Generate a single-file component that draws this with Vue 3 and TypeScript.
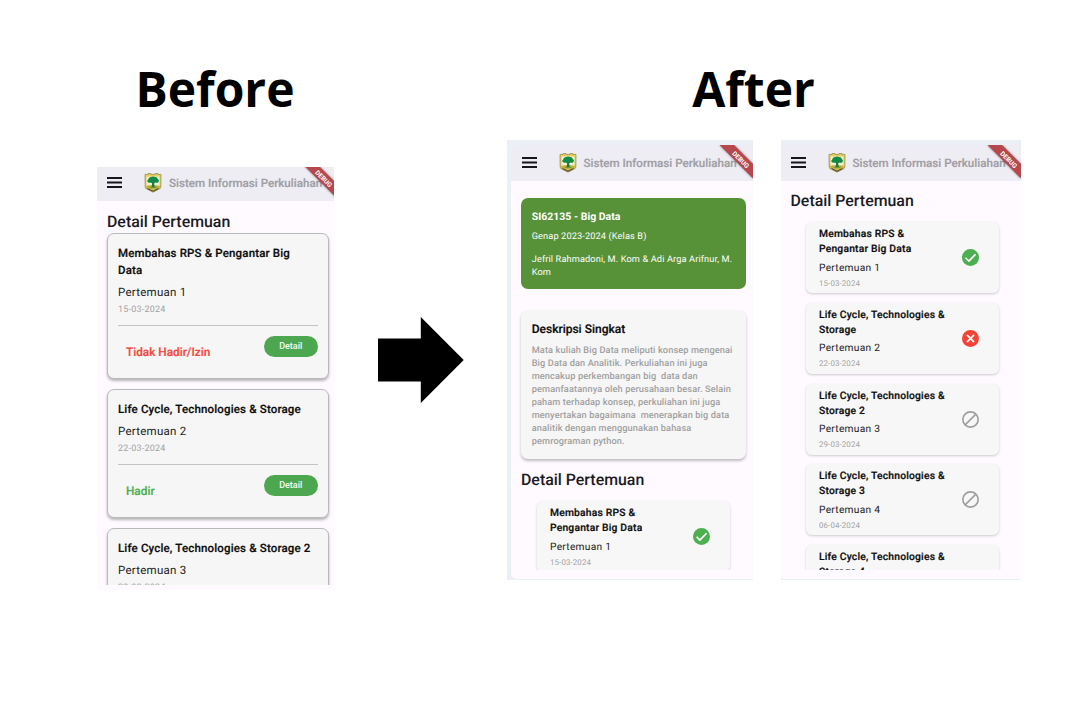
<script setup lang="ts">
import { defineComponent, h } from 'vue'

type Status = 'present' | 'absent' | 'none'

interface Meeting {
  title: string[]
  name: string
  date: string
  status: Status
}

interface OldMeeting {
  title: string[]
  name: string
  date: string
  label: string
  tone: string
}

const oldMeetings: OldMeeting[] = [
  { title: ['Membahas RPS & Pengantar Big', 'Data'], name: 'Pertemuan 1', date: '15-03-2024', label: 'Tidak Hadir/Izin', tone: 'red' },
  { title: ['Life Cycle, Technologies & Storage'], name: 'Pertemuan 2', date: '22-03-2024', label: 'Hadir', tone: 'green' },
  { title: ['Life Cycle, Technologies & Storage 2'], name: 'Pertemuan 3', date: '29-03-2024', label: '', tone: 'green' },
]

const meetings: Meeting[] = [
  { title: ['Membahas RPS &', 'Pengantar Big Data'], name: 'Pertemuan 1', date: '15-03-2024', status: 'present' },
  { title: ['Life Cycle, Technologies &', 'Storage'], name: 'Pertemuan 2', date: '22-03-2024', status: 'absent' },
  { title: ['Life Cycle, Technologies &', 'Storage 2'], name: 'Pertemuan 3', date: '29-03-2024', status: 'none' },
  { title: ['Life Cycle, Technologies &', 'Storage 3'], name: 'Pertemuan 4', date: '06-04-2024', status: 'none' },
  { title: ['Life Cycle, Technologies &', 'Storage 4'], name: '', date: '', status: 'none' },
]

const description: string[] = [
  'Mata kuliah Big Data meliputi konsep mengenai',
  'Big Data dan Analitik. Perkuliahan ini juga',
  'mencakup perkembangan big  data dan',
  'pemanfaatannya oleh perusahaan besar. Selain',
  'paham terhadap konsep, perkuliahan ini juga',
  'menyertakan bagaimana  menerapkan big data',
  'analitik dengan menggunakan bahasa',
  'pemrograman python.',
]

const AppBar = defineComponent({
  setup() {
    return () =>
      h('header', { class: 'bar' }, [
        h('svg', { class: 'bar-menu', viewBox: '0 0 15 11' }, [
          h('path', { d: 'M0 1h15M0 5.5h15M0 10h15', stroke: '#17171a', 'stroke-width': 1.8 }),
        ]),
        h('svg', { class: 'bar-logo', viewBox: '0 0 18 20' }, [
          h('path', { d: 'M1 2.600V1.400h3V.6h3v.8h4V.6h3v.8h3v1.200l-.2 11.400q-.3 2-2.400 2.400L9 19.200l-5.400-2.800Q1.200 16 1.200 14z', fill: '#e4cf5c', stroke: '#8a8148', 'stroke-width': 0.7 }),
          h('path', { d: 'M2.600 3.600h12.800v9.400H2.600z', fill: '#f3efd6' }),
          h('path', { d: 'M2.400 12.800q6.300-1.800 13.200 0v2L9 16.800l-6.600-2z', fill: '#c0b03a' }),
          h('path', { d: 'M8.100 9h2l.4 4.600 2.500.900H5.600l2.300-.900z', fill: '#1d7a3a' }),
          h('path', { d: 'M3.600 9Q2.600 7.600 4.200 6.400q.3-2.200 2.700-2.300 2.200-1.300 4.200 0 2.300-.1 2.700 2 2 1.200.7 2.800-1 1.500-2.800.6-1.300 1-2.600.3-1.400.7-2.700-.2-1.500.5-2.800-.6z', fill: '#0f8a47' }),
          h('path', { d: 'M3.500 15.600L9 18.200l5.500-2.600', fill: 'none', stroke: '#4d4632', 'stroke-width': 1.1 }),
        ]),
        h('span', { class: 'bar-title' }, 'Sistem Informasi Perkuliahan'),
        h('svg', { class: 'bar-ribbon', viewBox: '0 0 36 36' }, [
          h('path', { class: 'band', d: 'M2.500 0H17L36 19V33.500z' }),
          h('text', { x: 0, y: 2.2, transform: 'translate(23.7 14.700) rotate(45)', 'text-anchor': 'middle' }, 'DEBUG'),
        ]),
      ])
  },
})
</script>

<template>
  <main class="page">
    <section class="before">
      <h1 class="heading">Before</h1>
      <div class="phone phone-old">
        <AppBar />
        <div class="view view-old">
          <h2 class="section-title">Detail Pertemuan</h2>
          <article v-for="m in oldMeetings" :key="m.name" class="old-card">
            <h3 class="old-title"><span v-for="l in m.title" :key="l">{{ l }}</span></h3>
            <p class="old-name">{{ m.name }}</p>
            <p class="old-date">{{ m.date }}</p>
            <div v-if="m.label" class="old-foot">
              <span class="old-status" :class="m.tone">{{ m.label }}</span>
              <button class="old-button" type="button">Detail</button>
            </div>
          </article>
        </div>
      </div>
    </section>

    <svg class="arrow" viewBox="0 0 86 86"><path d="M0 21.500h42.800V0L85.700 42.900 42.800 86V64.600H0z" /></svg>

    <section class="after">
      <h1 class="heading">After</h1>
      <div class="phones">
        <div class="frame frame-a">
          <div class="phone">
            <AppBar />
            <div class="view view-a">
              <div class="course">
                <h3>SI62135 - Big Data</h3>
                <p class="term">Genap 2023-2024 (Kelas B)</p>
                <p class="staff">Jefril Rahmadoni, M. Kom &amp; Adi Arga Arifnur, M.</p>
                <p class="staff">Kom</p>
              </div>
              <div class="about">
                <h3>Deskripsi Singkat</h3>
                <p v-for="l in description" :key="l">{{ l }}</p>
              </div>
              <h2 class="section-title">Detail Pertemuan</h2>
              <div class="list">
                <article v-for="m in meetings.slice(0, 1)" :key="m.name" class="card">
                  <div class="card-text">
                    <h4><span v-for="l in m.title" :key="l">{{ l }}</span></h4>
                    <p class="name">{{ m.name }}</p>
                    <p class="date">{{ m.date }}</p>
                  </div>
                  <svg class="state" viewBox="0 0 20 20">
                    <circle cx="10" cy="10" r="10" fill="#4caf50" />
                    <path d="M4.200 10.300l3.900 3.800 7.900-7.900" fill="none" stroke="#fff" stroke-width="2" />
                  </svg>
                </article>
              </div>
            </div>
          </div>
        </div>

        <div class="frame frame-b">
          <div class="phone">
            <AppBar />
            <div class="view view-b">
              <h2 class="section-title">Detail Pertemuan</h2>
              <div class="list">
                <article v-for="m in meetings" :key="m.title[1]" class="card">
                  <div class="card-text">
                    <h4><span v-for="l in m.title" :key="l">{{ l }}</span></h4>
                    <p class="name">{{ m.name }}</p>
                    <p class="date">{{ m.date }}</p>
                  </div>
                  <svg class="state" viewBox="0 0 20 20">
                    <template v-if="m.status === 'present'">
                      <circle cx="10" cy="10" r="10" fill="#4caf50" />
                      <path d="M4.200 10.300l3.900 3.800 7.900-7.900" fill="none" stroke="#fff" stroke-width="2" />
                    </template>
                    <template v-else-if="m.status === 'absent'">
                      <circle cx="10" cy="10" r="10" fill="#f44336" />
                      <path d="M5.800 5.800l8.400 8.400M14.200 5.800l-8.400 8.400" stroke="#fff" stroke-width="2" />
                    </template>
                    <g v-else fill="none" stroke="#9e9e9e" stroke-width="1.9">
                      <circle cx="10" cy="10" r="9" />
                      <path d="M3.700 16.300L16.300 3.700" />
                    </g>
                  </svg>
                </article>
              </div>
            </div>
          </div>
        </div>
      </div>
    </section>
  </main>
</template>

<style>
body {
  margin: 0;
  background: #fff;
}

.bar {
  display: flex;
  align-items: center;
  position: relative;
  box-sizing: border-box;
  flex: none;
  height: 36.5px;
  overflow: hidden;
  background: #efedf4;
}

.bar-menu {
  flex: none;
  width: 15px;
  height: 11px;
}

.bar-logo {
  flex: none;
  width: 18px;
  height: 20px;
  margin-left: 22px;
}

.bar-title {
  margin-left: 7px;
  color: #a09fa4;
  font-size: 11.6px;
  font-weight: 500;
  white-space: nowrap;
  -webkit-text-stroke: 0.2px #a09fa4;
}

.bar-ribbon {
  position: absolute;
  top: 0;
  right: 0;
  width: 36px;
  height: 36px;
}

.bar-ribbon .band {
  fill: #b6474c;
  filter: drop-shadow(0 0 1px rgba(0, 0, 0, 0.5));
}

.bar-ribbon text {
  fill: #fff;
  font-size: 6.5px;
  font-weight: 700;
}
</style>

<style scoped>
.page {
  display: flex;
  width: 1080px;
  height: 720px;
  overflow: hidden;
  background: #fff;
  font-family: Roboto, "Liberation Sans", sans-serif;
  text-rendering: geometricPrecision;
}

h1, h2, h3, h4, p {
  margin: 0;
  white-space: pre;
}

.heading {
  height: 66px;
  color: #000;
  font-family: "Open Sans", "Noto Sans", sans-serif;
  font-size: 48px;
  font-weight: 700;
  line-height: 66px;
  text-align: center;
  text-rendering: auto;
}

.before {
  width: 238px;
  margin-left: 96px;
  padding-top: 56px;
}

.arrow {
  flex: none;
  width: 86px;
  height: 86px;
  margin: 317px 43px 0 44px;
}

.after {
  width: 514px;
  padding-top: 56px;
}

.after .heading {
  padding-right: 21px;
}

.phones {
  display: flex;
  gap: 28px;
  margin-top: 18px;
}

.phone {
  display: flex;
  flex-direction: column;
  overflow: hidden;
  background: #fefaff;
}

.phone-old {
  height: 423px;
  margin-top: 45px;
  margin-left: 1px;
}

.phone-old :deep(.bar) {
  height: 34px;
  padding: 0 0 3px 10px;
}

.phone-old :deep(.bar-ribbon) {
  top: -3px;
  right: -2px;
}

.frame {
  box-sizing: border-box;
  height: 440px;
  overflow: hidden;
  background: #ebf0f7;
}

.frame-a {
  width: 246px;
  padding: 4.5px 0 1px 4px;
}

.frame-b {
  width: 240px;
  padding: 4.5px 0 1px 0;
}

.frame .phone {
  height: 100%;
}

.frame-a .phone {
  border-radius: 6px 0 0 6px;
}

.frame-b .phone {
  border-radius: 0 0 0 3px;
}

.frame-a :deep(.bar) {
  padding-left: 10.500px;
}

.frame-b :deep(.bar) {
  padding-left: 9.500px;
}

.section-title {
  color: #1b1b1f;
  font-size: 15.900px;
  font-weight: 500;
  line-height: 20px;
}

.view {
  box-sizing: border-box;
  overflow: hidden;
}

.view-old {
  height: 384px;
  padding: 11px 5px 0 10px;
}

.old-card {
  box-sizing: border-box;
  width: 222px;
  margin-bottom: 10.500px;
  padding: 10.500px 10px 0;
  border: 1px solid #b9b9bb;
  border-radius: 7px;
  background: #f6f6f6;
  box-shadow: 0 2px 3px rgba(0, 0, 0, 0.28);
}

.view-old .section-title {
  margin-bottom: 1px;
}

.old-title {
  color: #0c0c0c;
  font-size: 11.500px;
  font-weight: 500;
  letter-spacing: 0.160px;
  line-height: 17px;
  -webkit-text-stroke: 0.2px #0c0c0c;
}

.old-title span,
h4 span {
  display: block;
}

.old-name {
  margin-top: 5px;
  color: #222;
  font-size: 11.500px;
  letter-spacing: 0.250px;
  line-height: 16px;
}

.old-date {
  margin-top: 4px;
  color: #a3a3a3;
  font-size: 9px;
  letter-spacing: 0.200px;
  line-height: 12px;
}

.old-foot {
  display: flex;
  box-sizing: border-box;
  justify-content: space-between;
  align-items: flex-start;
  height: 52.500px;
  margin-top: 9.500px;
  border-top: 1px solid #c4c4c4;
}

.old-status {
  margin: 18px 0 0 8px;
  font-size: 11.800px;
  font-weight: 500;
  line-height: 16px;
}

.old-status.red {
  color: #f4473b;
  -webkit-text-stroke: 0.2px #f4473b;
}

.old-status.green {
  color: #4caf50;
  -webkit-text-stroke: 0.2px #4caf50;
}

.old-button {
  width: 54.500px;
  height: 21.500px;
  margin-top: 9.500px;
  padding: 0;
  border: 0;
  border-radius: 11px;
  background: #4ca750;
  color: #f2fff2;
  font-family: inherit;
  font-size: 9px;
  font-weight: 500;
}

.view-a {
  height: 389px;
  padding: 17px 7.500px 0 10px;
}

.course {
  box-sizing: border-box;
  height: 91px;
  padding: 10.500px 0 0 10.700px;
  border-radius: 7px;
  background: #579239;
  color: #fff;
}

.course h3 {
  font-size: 10.500px;
  font-weight: 700;
  line-height: 16px;
}

.term {
  margin-top: 5px;
  font-size: 9.200px;
  letter-spacing: 0.130px;
  line-height: 13px;
}

.staff {
  font-size: 9.200px;
  letter-spacing: 0.130px;
  line-height: 13px;
}

.term + .staff {
  margin-top: 10px;
}

.about {
  box-sizing: border-box;
  height: 149px;
  margin-top: 20.500px;
  padding: 11.500px 0 0 10.700px;
  border-radius: 7px;
  background: #f6f6f6;
  box-shadow: 0 2px 3px rgba(0, 0, 0, 0.25);
}

.about h3 {
  margin-bottom: 6.500px;
  color: #0c0c0c;
  font-size: 12px;
  font-weight: 500;
  line-height: 16px;
  -webkit-text-stroke: 0.2px #0c0c0c;
}

.about p {
  color: #a0a0a0;
  font-size: 9.200px;
  font-weight: 500;
  letter-spacing: 0.120px;
  line-height: 13.100px;
}

.view-a .section-title {
  margin-top: 11px;
}

.view-a .list {
  padding: 11.500px 0 0 16px;
}

.view-b {
  height: 389px;
  padding: 10px 0 0 9.500px;
}

.view-b .list {
  padding: 11px 0 0 15.500px;
}

.card {
  display: flex;
  box-sizing: border-box;
  justify-content: space-between;
  align-items: flex-start;
  width: 193px;
  height: 71px;
  margin-bottom: 9.800px;
  padding: 4px 20px 0 13px;
  border-radius: 6px;
  background: #f7f7f7;
  box-shadow: 0 1px 2.500px rgba(0, 0, 0, 0.2);
}

.card h4 {
  color: #0c0c0c;
  font-size: 10.300px;
  font-weight: 500;
  letter-spacing: 0.200px;
  line-height: 15px;
  -webkit-text-stroke: 0.2px #0c0c0c;
}

.name {
  margin-top: 5.500px;
  color: #222;
  font-size: 10.200px;
  letter-spacing: 0.280px;
  line-height: 14px;
}

.date {
  margin-top: 3.100px;
  color: #a3a3a3;
  font-size: 7.900px;
  letter-spacing: 0.120px;
  line-height: 10px;
}

.state {
  flex: none;
  width: 17px;
  height: 17px;
  margin-top: 23px;
}
</style>
